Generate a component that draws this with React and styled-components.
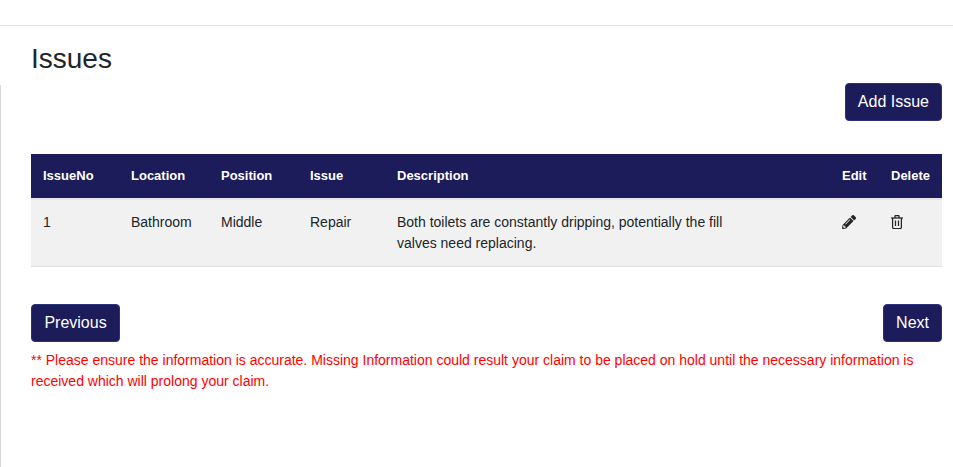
import styled, { createGlobalStyle } from 'styled-components'
import { FaPencilAlt } from 'react-icons/fa'

const navy = '#1d1c5a'

const GlobalStyle = createGlobalStyle`
  html, body {
    margin: 0;
    background: #fff;
    font-family: "Liberation Sans", Arial, sans-serif;
    font-size: 14px;
    color: #212529;
  }
`
const TopBar = styled.div`
  height: 25px;
  border-bottom: 1px solid #e4e4e4;
`
const Title = styled.h1`
  margin: 0;
  padding: 16px 0 0 31px;
  height: 43px;
  font-size: 28px;
  line-height: 34px;
  font-weight: 400;
`
const Content = styled.main`
  display: flow-root;
  min-height: 382px;
  box-sizing: border-box;
  padding: 0 11px 0 30px;
  border-left: 1px solid #d8d8d8;
`
const Toolbar = styled.div`
  display: flex;
  justify-content: ${(p) => p.$align || 'flex-end'};
  margin-top: ${(p) => p.$top || 0}px;
`
const Button = styled.button`
  height: 38px;
  min-width: ${(p) => p.$minWidth || 0}px;
  padding: 0 12px;
  box-sizing: border-box;
  border: 1px solid #2c3278;
  border-radius: 4px;
  background: ${navy};
  color: #fff;
  font-family: inherit;
  font-size: 16px;
`
const Table = styled.table`
  width: 100%;
  margin-top: 33px;
  border-collapse: collapse;
  table-layout: fixed;
`
const HeadCell = styled.th`
  width: ${(p) => p.$width}px;
  height: 45px;
  padding: 0 12px 2px;
  box-sizing: border-box;
  background: ${navy};
  border-bottom: 2px solid #e6e6ea;
  color: #fff;
  font-size: 13px;
  font-weight: 700;
  text-align: left;
`
const Cell = styled.td`
  height: 66px;
  padding: 12px;
  box-sizing: border-box;
  background: #f1f1f1;
  border-bottom: 1px solid #dee2e6;
  vertical-align: top;
  line-height: 21px;
  font-size: 14px;
`
const Description = styled.div`
  width: 340px;
`
const IconWrap = styled.span`
  display: block;
  height: 21px;
  font-size: 14px;
  color: #212529;
  svg {
    display: block;
    margin-top: 3px;
  }
`
const Notice = styled.p`
  margin: 8px 0 0;
  color: #ff0000;
  font-size: 14px;
  line-height: 21px;
`

const columns = [
  ['IssueNo', 88],
  ['Location', 90],
  ['Position', 89],
  ['Issue', 87],
  ['Description', 445],
  ['Edit', 49],
  ['Delete', 63],
]

function TrashIcon() {
  return (
    <svg width="12" height="14" viewBox="0 0 12 14" fill="none" stroke="currentColor" strokeWidth="1.25">
      <path d="M0 3h12" />
      <path d="M4 3V1.2c0-.4.2-.7.6-.7h2.8c.4 0 .6.3.6.7V3" />
      <path d="M1.6 3v9.2c0 .8.5 1.3 1.2 1.3h6.4c.7 0 1.2-.5 1.2-1.3V3" />
      <path d="M4.5 5.5v5.5M7.5 5.5v5.5" />
    </svg>
  )
}

function App() {
  return (
    <>
      <GlobalStyle />
      <TopBar />
      <Title>Issues</Title>
      <Content>
        <Toolbar $top={-2}>
          <Button>Add Issue</Button>
        </Toolbar>
        <Table>
          <thead>
            <tr>
              {columns.map(([name, width]) => (
                <HeadCell key={name} $width={width}>
                  {name}
                </HeadCell>
              ))}
            </tr>
          </thead>
          <tbody>
            <tr>
              <Cell>1</Cell>
              <Cell>Bathroom</Cell>
              <Cell>Middle</Cell>
              <Cell>Repair</Cell>
              <Cell>
                <Description>
                  Both toilets are constantly dripping, potentially the fill valves need replacing.
                </Description>
              </Cell>
              <Cell>
                <IconWrap>
                  <FaPencilAlt />
                </IconWrap>
              </Cell>
              <Cell>
                <IconWrap>
                  <TrashIcon />
                </IconWrap>
              </Cell>
            </tr>
          </tbody>
        </Table>
        <Toolbar $top={37} $align="space-between">
          <Button $minWidth={89}>Previous</Button>
          <Button>Next</Button>
        </Toolbar>
        <Notice>
          ** Please ensure the information is accurate. Missing Information could result your claim to be placed on hold
          until the necessary information is received which will prolong your claim.
        </Notice>
      </Content>
    </>
  )
}

export default App
